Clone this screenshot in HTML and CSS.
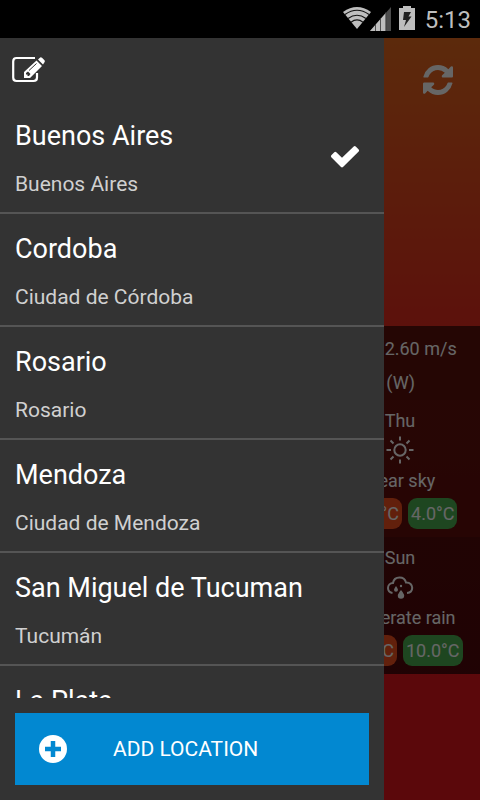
FILE: index.html
```html
<!DOCTYPE html>
<html lang="en">
<head>
  <meta charset="UTF-8" />
  <meta name="viewport" content="width=device-width, initial-scale=1.0" />
  <title>Weather</title>
  <link rel="stylesheet" href="styles.css">
</head>
<body>

<div class="status-bar">
  <div class="status-icons">
    <svg class="wifi" width="28" height="24" viewBox="0 0 28 24">
      <path d="M14 23 L0 6 Q14 -4 28 6 Z" fill="#bebebe"/>
      <path d="M2 8.500 Q14 0 26 8.500 M5 12.500 Q14 6 23 12.500 M8 16.200 Q14 11.500 20 16.200" fill="none" stroke="#111" stroke-width="1.200"/>
    </svg>
    <svg class="signal" width="21" height="25" viewBox="0 0 21 25">
      <path d="M0 25 L21 1 V25 Z" fill="#4c4c4c"/>
      <path d="M0 25 L16 6.700 V25 Z" fill="#bebebe"/>
      <path d="M5.500 18 V25 M10.500 12 V25 M15.800 6 V25" stroke="#333" stroke-width="0.800"/>
    </svg>
    <svg class="battery" width="16" height="24" viewBox="0 0 16 24">
      <path d="M4 0 H12 V2 H16 V24 H0 V2 H4 Z" fill="#bebebe"/>
      <path d="M5 6 H12 L9.500 10.500 H12.500 L5 21 L7 14 H4 Z" fill="#222"/>
    </svg>
  </div>
  <span class="clock">5:13</span>
</div>

<div class="app">

  <!-- Weather screen -->
  <main class="weather">
    <div class="toolbar">
      <button class="icon-btn" aria-label="Refresh">
        <svg width="30" height="30" viewBox="0 0 1536 1536" fill="#fff">
          <path d="M1511 928q0 5-1 7-64 268-268 434.500T764 1536q-146 0-282.500-55T238 1324l-129 129q-19 19-45 19t-45-19-19-45V960q0-26 19-45t45-19h448q26 0 45 19t19 45-19 45l-137 137q71 66 161 102t187 36q134 0 250-65t186-179q11-17 53-117 8-23 30-23h192q13 0 22.500 9.500t9.500 22.500zm25-800v448q0 26-19 45t-45 19h-448q-26 0-45-19t-19-45 19-45l138-138Q969 256 768 256q-134 0-250 65T332 500q-11 17-53 117-8 23-30 23H50q-13 0-22.500-9.500T18 608v-7q65-268 270-434.500T768 0q146 0 284 55.500T1297 212l130-129q19-19 45-19t45 19 19 45z"/>
        </svg>
      </button>
    </div>

    <section class="wind">
      <div class="wind-speed">
        <svg width="32" height="24" viewBox="0 0 32 24" fill="none" stroke="#fff" stroke-width="2">
          <path d="M2 9 H20 A4 4 0 1 0 16 5 M2 14 H26 M2 19 H18"/>
        </svg>
        <span>2.60 m/s</span>
      </div>
      <div class="wind-dir">(W)</div>
    </section>

    <section class="forecast">
      <div class="day">
        <div class="day-name">Thu</div>
        <svg width="28" height="28" viewBox="0 0 28 28" fill="none" stroke="#fff" stroke-width="2">
          <circle cx="14" cy="14" r="5.700"/>
          <path d="M14 0.500 V4.500 M14 23.500 V27.500 M0.500 14 H5 M23 14 H27.500 M4.500 4.500 L7.500 7.500 M20.500 20.500 L23.500 23.500 M4.500 23.500 L7.500 20.500 M20.500 7.500 L23.500 4.500"/>
        </svg>
        <div class="day-text">clear sky</div>
        <div class="temps">
          <span class="temp max">15.0°C</span>
          <span class="temp min">4.0°C</span>
        </div>
      </div>
    </section>

    <section class="forecast later">
      <div class="day">
        <div class="day-name">Sun</div>
        <svg width="28" height="28" viewBox="0 0 28 28" fill="none" stroke="#fff" stroke-width="2">
          <path d="M6.500 20 C3.500 19.500 2 17.300 2 15 C2 12 4.200 10 7 10 C7.600 6.500 10.300 4.500 13.500 4.500 C17 4.500 19.300 6.600 20 9.500 C24 9.200 26.200 12 26.200 14.800 C26.200 17.500 24.500 19.800 21 20"/>
          <g fill="#fff" stroke="none">
            <path d="M15 17 q3.200 4 3.200 5.500 a3.200 3.200 0 0 1 -6.400 0 q0 -1.500 3.200 -5.500 Z"/>
            <path d="M10 13 q2 2.700 2 3.800 a2 2 0 0 1 -4 0 q0 -1.100 2 -3.800 Z"/>
            <circle cx="15" cy="13" r="1.200"/>
          </g>
        </svg>
        <div class="day-text">moderate rain</div>
        <div class="temps">
          <span class="temp max">14.0°C</span>
          <span class="temp min">10.0°C</span>
        </div>
      </div>
    </section>
  </main>

  <div class="scrim"></div>

  <!-- Locations drawer -->
  <aside class="drawer">
    <div class="drawer-header">
      <button class="icon-btn" aria-label="Edit locations">
        <svg width="34" height="28" viewBox="0 0 34 28">
          <path d="M23 2 H4.500 Q1.200 2 1.200 5.500 V21.500 Q1.200 25 4.500 25 H21.500 Q25 25 25 21.500 V17" fill="none" stroke="#fff" stroke-width="2.200"/>
          <path d="M12 22 V16 L24.500 4.500 L30 10 L18 22 Z M26 3.500 L28.200 1.500 Q29 1 30 1.800 L32.500 4.300 Q33.300 5.200 32.500 6.200 L31 8.500 Z" fill="#fff"/>
          <path d="M17 14.500 L24.500 7.500" stroke="#333" stroke-width="1"/>
          <path d="M14 17 L16 15.500 L18.500 18 L17 20 H15.500 V18.500 H14 Z" fill="#333"/>
        </svg>
      </button>
    </div>

    <ul class="locations">
      <li class="location">
        <div>
          <div class="city">Buenos Aires</div>
          <div class="region">Buenos Aires</div>
        </div>
        <svg width="30" height="24" viewBox="0 0 30 24">
          <path d="M1.300 10.200 L4.300 7.200 Q5.300 6.400 6.300 7.200 L12 12.800 L23.700 1.400 Q24.700 0.600 25.700 1.400 L28.700 4.400 Q29.600 5.400 28.700 6.400 L13 22 Q12 22.900 11 22 L1.300 12.200 Q0.500 11.200 1.300 10.200 Z" fill="#fff"/>
        </svg>
      </li>
      <li class="location">
        <div>
          <div class="city">Cordoba</div>
          <div class="region">Ciudad de Córdoba</div>
        </div>
      </li>
      <li class="location">
        <div>
          <div class="city">Rosario</div>
          <div class="region">Rosario</div>
        </div>
      </li>
      <li class="location">
        <div>
          <div class="city">Mendoza</div>
          <div class="region">Ciudad de Mendoza</div>
        </div>
      </li>
      <li class="location">
        <div>
          <div class="city">San Miguel de Tucuman</div>
          <div class="region">Tucumán</div>
        </div>
      </li>
      <li class="location">
        <div>
          <div class="city">La Plata</div>
          <div class="region">La Plata</div>
        </div>
      </li>
    </ul>

    <button class="add-btn">
      <svg width="28" height="28" viewBox="0 0 28 28">
        <circle cx="14" cy="14" r="14" fill="#fff"/>
        <path d="M14 6 V22 M6 14 H22" stroke="#0288d1" stroke-width="4.500"/>
      </svg>
      <span>ADD LOCATION</span>
    </button>
  </aside>

</div>

</body>
</html>
```

FILE: styles.css
```css
* {
  box-sizing: border-box;
}

body {
  margin: 0;
  height: 100vh;
  display: flex;
  flex-direction: column;
  background: #000;
  color: #fff;
  font-family: Roboto, "Noto Sans", sans-serif;
  overflow: hidden;
}

button {
  font: inherit;
  color: inherit;
  border: 0;
  padding: 0;
  background: none;
  cursor: pointer;
}

svg {
  display: block;
  flex: none;
}

/* Status bar */
.status-bar {
  height: 38px;
  flex: none;
  display: flex;
  justify-content: flex-end;
  gap: 10px;
  padding-right: 9px;
  color: #bebebe;
}

.status-icons {
  display: flex;
  padding-top: 6px;
}

.signal {
  margin: 0 8px 0 -1px;
}

.clock {
  font-size: 24px;
  line-height: 40px;
}

.app {
  position: relative;
  flex: 1;
  min-height: 0;
}

/* Weather screen */
.weather {
  height: 100%;
  background: linear-gradient(#e66a1e, #e62b1e 38%, #e4161c 84%);
  font-size: 18px;
}

.toolbar {
  display: flex;
  justify-content: flex-end;
  height: 288px;
  padding: 27px 27px 0 0;
}

.toolbar .icon-btn {
  height: 30px;
}

.wind {
  height: 74px;
  padding: 6px 0 0 4px;
  background: rgba(0, 0, 0, 0.6);
  line-height: 34px;
  display: grid;
  grid-template-columns: repeat(3, 1fr);
}

.wind-speed,
.wind-dir {
  grid-column: 3;
  display: flex;
  justify-content: center;
  align-items: center;
  gap: 8px;
}

.forecast {
  display: grid;
  grid-template-columns: repeat(3, 1fr);
  background: rgba(0, 0, 0, 0.57);
}

.forecast.later {
  background: rgba(0, 0, 0, 0.64);
}

.day {
  grid-column: 3;
  display: flex;
  flex-direction: column;
  align-items: center;
  padding: 7px 0 8px;
  white-space: nowrap;
}

.day svg {
  margin-top: 1px;
}

.day-name,
.day-text {
  line-height: 28px;
}

.day-text {
  margin: 3px 0;
}

.temps {
  display: flex;
  gap: 6px;
}

.temp {
  line-height: 31px;
  padding: 0 3px;
  border-radius: 9px;
}

.max {
  background: #f4511e;
}

.min {
  background: #4caf50;
}

.scrim {
  position: absolute;
  inset: 0;
  background: rgba(0, 0, 0, 0.6);
}

/* Locations drawer */
.drawer {
  position: absolute;
  top: 0;
  bottom: 0;
  left: 0;
  width: 80%;
  display: flex;
  flex-direction: column;
  background: #333;
}

.drawer-header {
  height: 63px;
  flex: none;
  padding: 18px 12px;
}

.locations {
  flex: 1;
  min-height: 0;
  margin: 0;
  padding: 0;
  list-style: none;
  overflow: hidden;
}

.location {
  display: flex;
  align-items: center;
  justify-content: space-between;
  height: 113px;
  padding: 0 24px 0 15px;
  border-bottom: 2px solid #555;
}

.city,
.region {
  padding-top: 6px;
  line-height: 42px;
}

.city {
  font-size: 27px;
}

.region {
  font-size: 21px;
  color: #d0d0d0;
}

.add-btn {
  display: flex;
  align-items: center;
  gap: 46px;
  height: 72px;
  flex: none;
  margin: 15px;
  padding: 0 24px;
  background: #0288d1;
  font-size: 21px;
}
```
